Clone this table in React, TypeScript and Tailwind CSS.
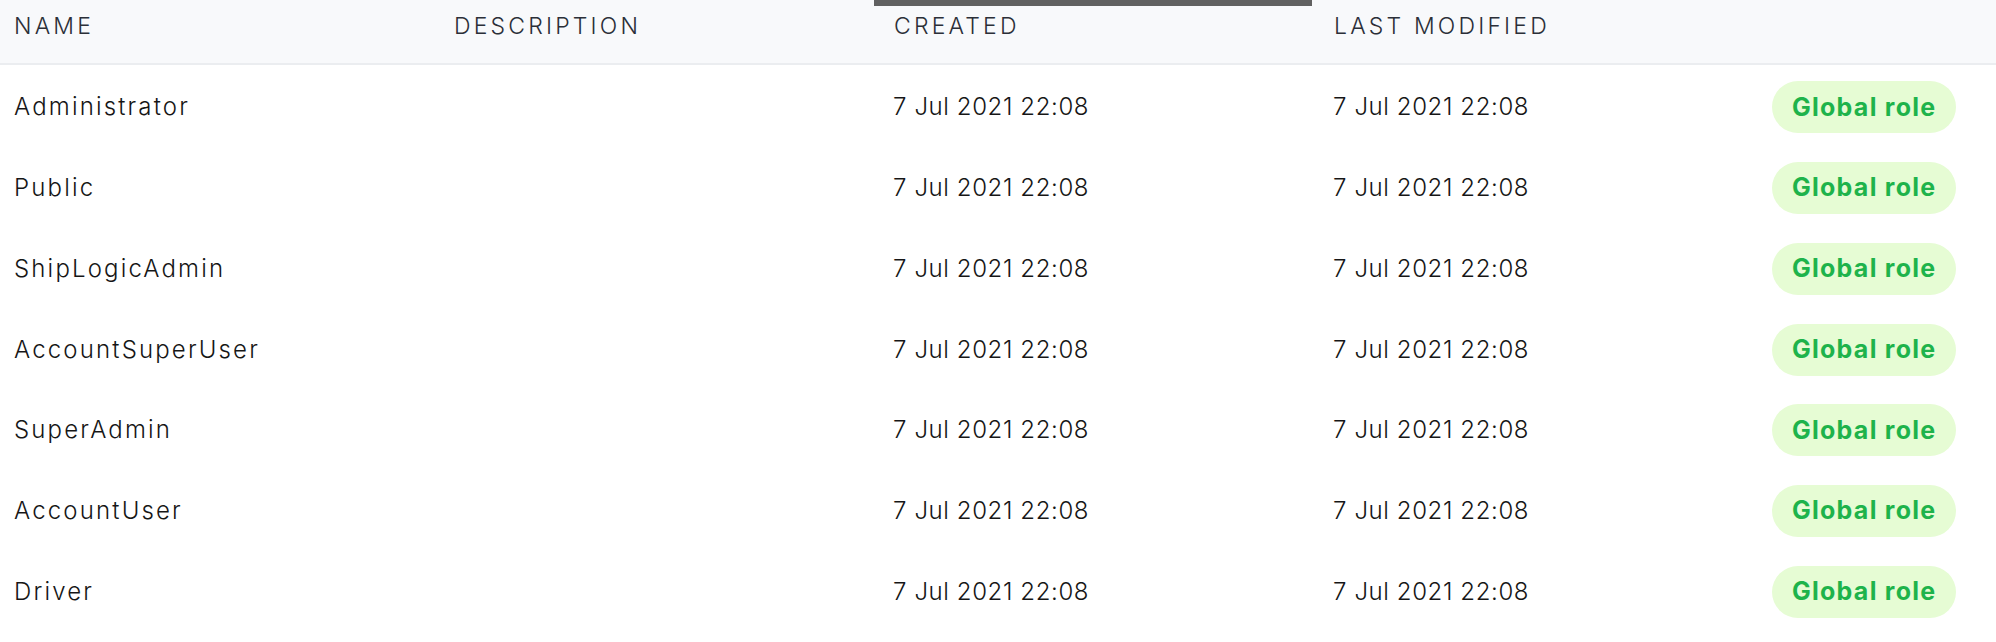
const roles = [
  'Administrator',
  'Public',
  'ShipLogicAdmin',
  'AccountSuperUser',
  'SuperAdmin',
  'AccountUser',
  'Driver',
]

const columns = ['Name', 'Description', 'Created', 'Last modified', '']

export default function App() {
  return (
    <div
      className="w-[1996px] h-[642px] overflow-hidden bg-white text-[#161616]"
      style={{ fontFamily: 'Inter, "Open Sans", sans-serif' }}
    >
      {/* header */}
      <div className="relative h-[65px] bg-[#f8f9fb] border-b-2 border-[#ebedf0]">
        <div className="absolute top-0 left-[874px] w-[438px] h-[6px] bg-[#616161]" />
        <div className="grid grid-cols-[440px_440px_440px_440px_1fr] pt-[14px]">
          {columns.map((col, i) => (
            <div
              key={i}
              className="pl-[14px] text-[23px] leading-[25px] font-light uppercase tracking-[0.138em] text-[#2b2f38]"
            >
              {col}
            </div>
          ))}
        </div>
      </div>

      {/* rows */}
      <div className="flex flex-col pt-[2px]">
        {roles.map((role) => (
          <div
            key={role}
            className="grid grid-cols-[440px_440px_440px_440px_1fr] h-[80.75px] items-center text-[24px] font-light"
          >
            <div className="pl-[14px] tracking-[0.09em]">{role}</div>
            <div className="pl-[14px]"></div>
            <div className="pl-[13px] tracking-[0.025em]">7 Jul 2021 22:08</div>
            <div className="pl-[13px] tracking-[0.025em]">7 Jul 2021 22:08</div>
            <div className="pl-[12px]">
              <span className="inline-flex items-center h-[52px] px-5 rounded-full bg-[#e6fcd4] text-[#1eb34b] text-[25px] font-bold tracking-[0.05em]">
                Global role
              </span>
            </div>
          </div>
        ))}
      </div>
    </div>
  )
}
